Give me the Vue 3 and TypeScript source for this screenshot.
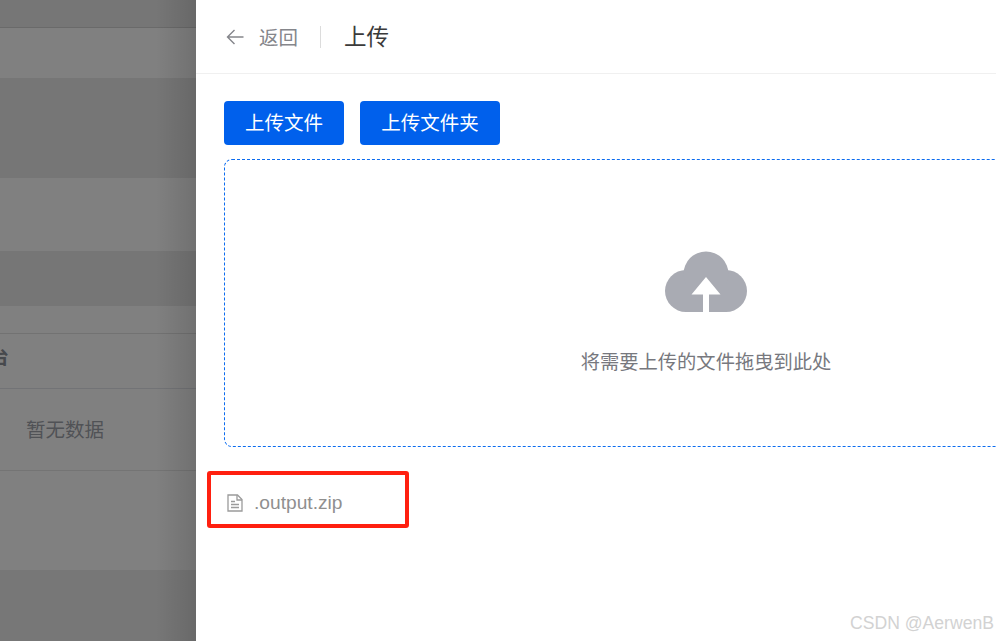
<script setup lang="ts">
interface Band { id: number; height: number; tone: string }
const bands: Band[] = [
  { id: 1, height: 27, tone: 'mid' },
  { id: 2, height: 51, tone: 'light top-line' },
  { id: 3, height: 100, tone: 'dark' },
  { id: 4, height: 73, tone: 'light' },
  { id: 5, height: 55, tone: 'dark' },
]
</script>

<template>
  <div class="page">
    <aside class="backdrop">
      <div
        v-for="b in bands"
        :key="b.id"
        class="band"
        :class="b.tone"
        :style="{ height: b.height + 'px' }"
      ></div>
      <div class="spacer"></div>
      <div class="head-row"><span class="head-text">平台</span></div>
      <div class="empty-row"><span>暂无数据</span></div>
      <div class="blank-row"></div>
      <div class="footer-band"></div>
      <div class="shadow"></div>
    </aside>

    <main class="panel">
      <header class="topbar">
        <button class="back" type="button">
          <svg width="18" height="16" viewBox="0 0 18 16" fill="none">
            <path d="M8.500 1 1.500 8l7 7M1.500 8h16" stroke="#85868b" stroke-width="1.400" />
          </svg>
          <span>返回</span>
        </button>
        <i class="divider"></i>
        <h1>上传</h1>
      </header>

      <section class="content">
        <div class="actions">
          <button class="primary wide" type="button">上传文件</button>
          <button class="primary wider" type="button">上传文件夹</button>
        </div>

        <div class="dropzone">
          <svg class="cloud" width="82" height="62" viewBox="0 0 82 62">
            <g fill="#a9abb3">
              <circle cx="21" cy="40" r="21" />
              <circle cx="61" cy="40" r="21" />
              <circle cx="41" cy="23" r="22.500" />
              <rect x="21" y="30" width="40" height="31" />
            </g>
            <path fill="#fff" d="M41 26 55.500 43.500H44V61H38V43.500H26.500Z" />
          </svg>
          <p>将需要上传的文件拖曳到此处</p>
        </div>

        <div class="file-row">
          <svg width="16" height="18" viewBox="0 0 16 18" fill="none" stroke="#9b9b9b" stroke-width="1.300">
            <path d="M1 1h9.500L15 5.500V17H1Z" />
            <path d="M10 1v5h5M4 7.500h4M4 10.500h8M4 13.500h8" />
          </svg>
          <span>.output.zip</span>
        </div>
      </section>

      <div class="annotation"></div>
      <div class="watermark">CSDN @AerwenB</div>
    </main>
  </div>
</template>

<style>
html, body { margin: 0; overflow: hidden; background: #fff; }
</style>

<style scoped>
.page {
  display: flex;
  width: 996px;
  height: 641px;
  overflow: hidden;
  font-family: "Noto Sans CJK SC", "Liberation Sans", sans-serif;
}
.backdrop {
  position: relative;
  flex: 0 0 196px;
  display: flex;
  flex-direction: column;
  overflow: hidden;
  background: #808080;
}
.band { box-sizing: border-box; }
.mid { background: #767676; }
.light { background: #808080; }
.dark { background: #767676; }
.top-line { border-top: 1px solid #6a6a6a; }
.spacer { height: 27px; background: #808080; border-bottom: 1px solid #727272; }
.head-row {
  box-sizing: border-box;
  height: 55px;
  padding-bottom: 12px;
  display: flex;
  align-items: center;
  border-bottom: 1px solid #727376;
  overflow: hidden;
}
.head-text {
  margin-left: -30px;
  font-size: 19.500px;
  font-weight: 700;
  color: #47494d;
  white-space: nowrap;
}
.empty-row {
  box-sizing: border-box;
  height: 82px;
  padding: 0 0 2px 26px;
  display: flex;
  align-items: center;
  border-bottom: 1px solid #747474;
  font-size: 19.500px;
  color: #505256;
}
.blank-row { height: 99px; }
.footer-band { flex: 1; background: #777777; }
.shadow {
  position: absolute;
  inset: 0 0 0 auto;
  width: 40px;
  background: linear-gradient(to right, rgba(0, 0, 0, 0), rgba(0, 0, 0, 0.12));
}
.panel {
  position: relative;
  flex: 1;
  min-width: 0;
  background: #fff;
  overflow: hidden;
}
.topbar {
  box-sizing: border-box;
  height: 74px;
  padding: 0 28px;
  display: flex;
  align-items: center;
  border-bottom: 1px solid #f0f0f0;
}
.back {
  display: flex;
  align-items: center;
  gap: 15px;
  padding: 0;
  border: 0;
  background: none;
  font: inherit;
  font-size: 19.500px;
  color: #85868b;
}
.back svg { margin-left: 2px; }
.divider {
  width: 1px;
  height: 22px;
  margin: 0 23px 0 22px;
  background: #dcdcdc;
}
h1 {
  margin: 0 0 3px;
  font-size: 22.500px;
  font-weight: 400;
  color: #3a3a3a;
}
.content { padding: 27px 0 0 28px; }
.actions { display: flex; gap: 16px; }
.primary {
  height: 44px;
  padding: 0 0 3px;
  border: 0;
  border-radius: 4px;
  background: #0060ec;
  color: #fff;
  font: inherit;
  font-size: 19.500px;
}
.wide { width: 120px; }
.wider { width: 140px; }
.dropzone {
  box-sizing: border-box;
  width: 964px;
  height: 288px;
  margin-top: 14px;
  padding-top: 91px;
  display: flex;
  flex-direction: column;
  align-items: center;
  border: 1px dashed #0b6cf0;
  border-radius: 8px;
}
.cloud { display: block; }
.dropzone p {
  margin: 34px 0 0;
  font-size: 19.300px;
  line-height: 28px;
  color: #77787e;
}
.file-row {
  display: flex;
  align-items: center;
  gap: 11px;
  margin-top: 46px;
  padding-left: 3px;
  height: 20px;
  font-family: "Liberation Sans", sans-serif;
  font-size: 19.200px;
  color: #8f8f8f;
}
.annotation {
  position: absolute;
  left: 11px;
  top: 471px;
  box-sizing: border-box;
  width: 202px;
  height: 57px;
  border: 4px solid #ff2010;
  border-radius: 3px;
}
.watermark {
  position: absolute;
  right: 2px;
  bottom: 7px;
  font-family: "Liberation Sans", sans-serif;
  font-size: 17.600px;
  line-height: 22px;
  color: #d2d2d2;
  white-space: nowrap;
}
</style>
